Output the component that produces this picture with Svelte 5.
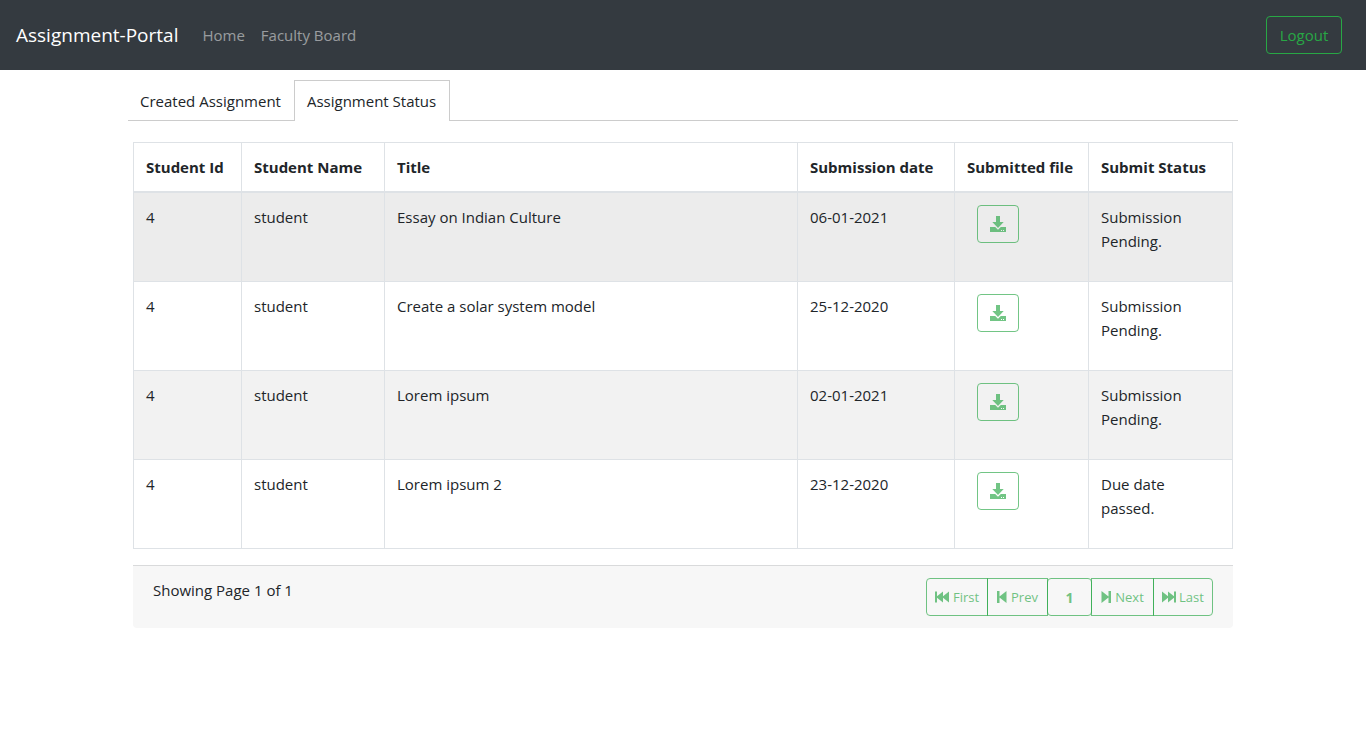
<script>
  const rows = [
    { id: 4, name: 'student', title: 'Essay on Indian Culture', date: '06-01-2021', status: 'Submission Pending.' },
    { id: 4, name: 'student', title: 'Create a solar system model', date: '25-12-2020', status: 'Submission Pending.' },
    { id: 4, name: 'student', title: 'Lorem ipsum', date: '02-01-2021', status: 'Submission Pending.' },
    { id: 4, name: 'student', title: 'Lorem ipsum 2', date: '23-12-2020', status: 'Due date passed.' }
  ];
</script>

<nav class="navbar">
  <a class="brand" href="#top">Assignment-Portal</a>
  <div class="links">
    <a href="#home">Home</a>
    <a href="#faculty">Faculty Board</a>
  </div>
  <button class="btn logout" type="button">Logout</button>
</nav>

<main class="container">
  <div class="tabs" role="tablist">
    <button class="tab" type="button" role="tab" aria-selected="false">Created Assignment</button>
    <button class="tab active" type="button" role="tab" aria-selected="true">Assignment Status</button>
  </div>

  <div class="panel">
    <table>
      <colgroup>
        <col class="c-id" /><col class="c-name" /><col /><col class="c-date" /><col class="c-file" /><col class="c-status" />
      </colgroup>
      <thead>
        <tr>
          <th>Student Id</th>
          <th>Student Name</th>
          <th>Title</th>
          <th>Submission date</th>
          <th>Submitted file</th>
          <th>Submit Status</th>
        </tr>
      </thead>
      <tbody>
        {#each rows as row}
          <tr>
            <td>{row.id}</td>
            <td>{row.name}</td>
            <td>{row.title}</td>
            <td>{row.date}</td>
            <td>
              <button class="btn download" type="button" aria-label="Download" disabled>
                <svg width="16" height="16" viewBox="0 0 16 16" fill="currentColor" aria-hidden="true">
                  <path d="M6 0h4v6h3.700L8 12 2.300 6H6z" />
                  <path fill-rule="evenodd" d="M0 11h5.200L8 13.700 10.800 11H16v5H0zM11 14v1h1v-1zM13 14v1h1v-1z" />
                </svg>
              </button>
            </td>
            <td>{row.status}</td>
          </tr>
        {/each}
      </tbody>
    </table>

    <footer class="pager">
      <span>Showing Page 1 of 1</span>
      <div class="group">
        <button class="btn page first" type="button" disabled>
          <svg width="14" height="12" viewBox="0 0 14 12" fill="currentColor" aria-hidden="true"><path d="M0 .5h2v4.800L8 .5v4.800l6-4.800v11L8 6.700v4.800L2 6.700v4.800H0z" /></svg>
          First
        </button>
        <button class="btn page prev" type="button" disabled>
          <svg width="10" height="12" viewBox="0 0 10 12" fill="currentColor" aria-hidden="true"><path d="M0 0h2.500v5.500L9.500 0v12l-7-5.500V12H0z" /></svg>
          Prev
        </button>
        <input class="number" type="text" value="1" aria-label="Page number" disabled />
        <button class="btn page next" type="button" disabled>
          <svg width="10" height="12" viewBox="0 0 10 12" fill="currentColor" aria-hidden="true"><path d="M10 0H7.500v5.500L.5 0v12l7-5.500V12H10z" /></svg>
          Next
        </button>
        <button class="btn page last" type="button" disabled>
          <svg width="14" height="12" viewBox="0 0 14 12" fill="currentColor" aria-hidden="true"><path d="M14 .5h-2v4.800L6 .5v4.800L0 .5v11l6-4.800v4.800l6-4.800v4.800h2z" /></svg>
          Last
        </button>
      </div>
    </footer>
  </div>
</main>

<style>
  :global(body) {
    margin: 0;
    background: #fff;
    color: #212529;
    font-family: "Segoe UI", "Open Sans", "Noto Sans", sans-serif;
    font-size: 15px;
    line-height: 24px;
  }
  :global(*) { box-sizing: border-box; }

  button, input { font: inherit; color: inherit; margin: 0; }

  .navbar {
    display: flex;
    align-items: center;
    padding: 16px 24px 16px 16px;
    background: #343a40;
  }
  .navbar a { text-decoration: none; }
  .brand { color: #fff; font-size: 19px; margin-right: 24px; }
  .links { display: flex; flex: 1; gap: 16px; }
  .links a { color: rgba(255, 255, 255, 0.5); }

  .btn {
    height: 38px;
    padding: 0 12px;
    border: 1px solid #28a745;
    border-radius: 4px;
    background: transparent;
    color: #28a745;
  }
  .logout { min-width: 76px; }

  .container {
    max-width: 1140px;
    margin: 0 auto;
    padding: 10px 15px;
  }
  .tabs { display: flex; border-bottom: 1px solid #ccc; }
  .tab {
    height: 41px;
    padding: 0 13px 0 12px;
    margin-bottom: -1px;
    border: 1px solid transparent;
    border-bottom: 0;
    background: transparent;
  }
  .tab:first-child { border-width: 0; }
  .tab.active { border-color: #ccc; background: #fff; }

  .panel { padding: 21px 5px; }

  table {
    width: 100%;
    table-layout: fixed;
    border-collapse: collapse;
    margin-bottom: 16px;
  }
  .c-id { width: 108px; }
  .c-name { width: 143px; }
  .c-date { width: 157px; }
  .c-file { width: 134px; }
  .c-status { width: 144px; }
  th, td {
    padding: 12px;
    border: 1px solid #dee2e6;
    text-align: left;
    vertical-align: top;
  }
  th { font-weight: 700; white-space: nowrap; border-bottom-width: 2px; }
  tbody tr:nth-child(odd) { background: #f2f2f2; }
  tbody tr:first-child { background: #ececec; }
  .download {
    display: flex;
    align-items: center;
    margin: 0 0 26px 10px;
    opacity: 0.65;
  }
  .download svg { display: block; }

  .pager {
    display: flex;
    justify-content: space-between;
    padding: 12px 20px;
    border-top: 1px solid #d9dadb;
    border-radius: 0 0 4px 4px;
    background: #f7f7f7;
  }
  .group { display: flex; }
  .page {
    display: flex;
    align-items: center;
    justify-content: center;
    gap: 4px;
    padding: 0;
    margin-left: -1px;
    border-radius: 0;
    font-size: 13px;
    opacity: 0.65;
  }
  .first { width: 62px; margin-left: 0; border-radius: 4px 0 0 4px; }
  .prev { width: 61px; }
  .next { width: 63px; }
  .last { width: 60px; gap: 3px; border-radius: 0 4px 4px 0; }
  .number {
    width: 45px;
    height: 38px;
    padding: 0;
    margin-left: -1px;
    border: 1px solid #28a745;
    border-radius: 4px;
    background: transparent;
    color: #28a745;
    font-size: 14px;
    font-weight: 700;
    text-align: center;
    opacity: 0.65;
  }
</style>
